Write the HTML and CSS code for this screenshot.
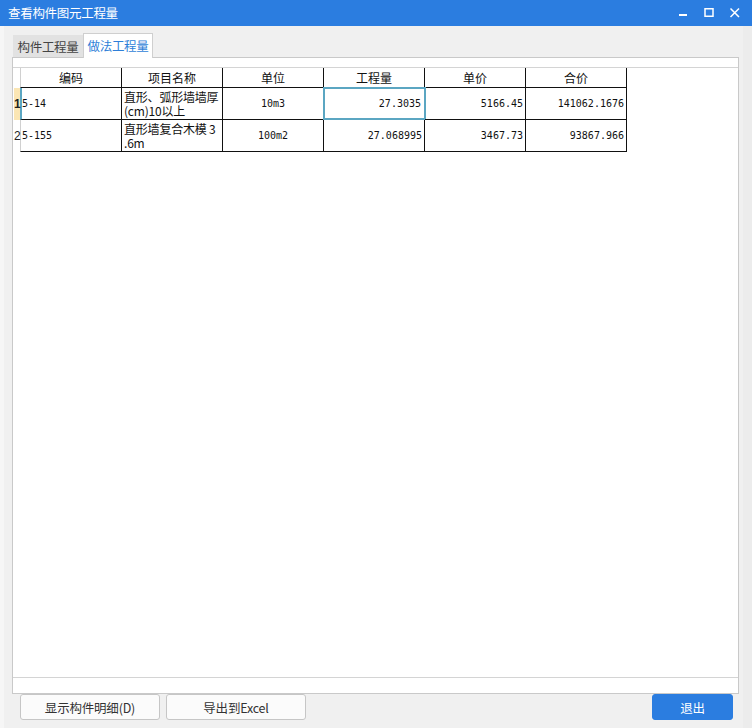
FILE: index.html
```html
<!DOCTYPE html>
<html lang="zh">
<head>
<meta charset="utf-8">
<title>查看构件图元工程量</title>
<link rel="stylesheet" href="styles.css">
</head>
<body>
<div class="window">
  <div class="titlebar">
    <div class="title">查看构件图元工程量</div>
    <div class="controls">
      <span class="ctl"><svg width="12" height="12" viewBox="0 0 12 12"><rect x="2" y="7" width="8" height="2" fill="#fff"/></svg></span>
      <span class="ctl"><svg width="12" height="12" viewBox="0 0 12 12"><rect x="2" y="1.75" width="8" height="7.5" fill="none" stroke="#fff" stroke-width="1.5"/></svg></span>
      <span class="ctl"><svg width="12" height="12" viewBox="0 0 12 12"><path d="M1.5 1.5 L10 10 M10 1.5 L1.5 10" stroke="#fff" stroke-width="1.5" fill="none"/></svg></span>
    </div>
  </div>
  <div class="main">
    <div class="tabs">
      <div class="tab">构件工程量</div>
      <div class="tab active">做法工程量</div>
    </div>
    <div class="panel">
      <div class="spacer"></div>
      <div class="gridarea">
        <div class="grid">
          <div class="row head">
            <div class="rh"></div>
            <div class="c first">编码</div>
            <div class="c">项目名称</div>
            <div class="c">单位</div>
            <div class="c">工程量</div>
            <div class="c">单价</div>
            <div class="c">合价</div>
          </div>
          <div class="row data current">
            <div class="rh">1</div>
            <div class="c first left mono">5-14</div>
            <div class="c name">直形、弧形墙墙厚(cm)10以上</div>
            <div class="c mono">10m3</div>
            <div class="c right mono selected">27.3035</div>
            <div class="c right mono">5166.45</div>
            <div class="c right mono">141062.1676</div>
          </div>
          <div class="row data">
            <div class="rh">2</div>
            <div class="c first left mono">5-155</div>
            <div class="c name">直形墙复合木模 3&#8203;.6m</div>
            <div class="c mono">100m2</div>
            <div class="c right mono">27.068995</div>
            <div class="c right mono">3467.73</div>
            <div class="c right mono">93867.966</div>
          </div>
        </div>
      </div>
      <div class="hscroll"></div>
    </div>
    <div class="buttons">
      <button class="btn">显示构件明细(D)</button>
      <button class="btn">导出到Excel</button>
      <button class="btn primary">退出</button>
    </div>
  </div>
  <div class="grip"><svg width="9" height="9" viewBox="0 0 9 9"><g fill="#7a7a7a"><rect x="7" y="1" width="2" height="2"/><rect x="4" y="4" width="2" height="2"/><rect x="7" y="4" width="2" height="2"/><rect x="1" y="7" width="2" height="2"/><rect x="4" y="7" width="2" height="2"/><rect x="7" y="7" width="2" height="2"/></g></svg></div>
</div>
</body>
</html>
```

FILE: styles.css
```css
* { box-sizing: border-box; }
html, body {
  margin: 0;
  padding: 0;
}
body {
  width: 752px;
  height: 728px;
  overflow: hidden;
  background: #f0f0f0;
  font-family: "Noto Sans CJK SC", "Noto Sans", sans-serif;
  color: #222;
}
.window {
  position: relative;
  width: 752px;
  height: 728px;
  display: flex;
  flex-direction: column;
  border-left: 4px solid #f6f6f6;
  border-right: 9px solid #ececec;
}
.titlebar {
  height: 26px;
  margin-left: -4px;
  margin-right: -9px;
  background: #2b7de0;
  color: #fff;
  display: flex;
  align-items: center;
  justify-content: space-between;
  padding-left: 8px;
  padding-right: 4px;
}
.title {
  font-size: 12.5px;
  letter-spacing: -0.3px;
  line-height: 26px;
}
.controls {
  display: flex;
  height: 26px;
}
.ctl {
  width: 26px;
  height: 26px;
  display: flex;
  align-items: center;
  justify-content: center;
}
.main {
  flex: 1;
  display: flex;
  flex-direction: column;
  padding: 0 4px 0 8px;
}
.tabs {
  height: 31px;
  display: flex;
  align-items: flex-end;
  padding-left: 1px;
}
.tab {
  width: 70px;
  height: 22px;
  background: #e2e2e2;
  color: #444;
  font-size: 12.5px;
  letter-spacing: -0.3px;
  display: flex;
  align-items: center;
  justify-content: center;
}
.tab.active {
  height: 25px;
  background: #fff;
  color: #2f7fd8;
  border: 1px solid #cfcfcf;
  border-bottom: none;
  margin-bottom: -1px;
  position: relative;
  z-index: 1;
  padding-bottom: 2px;
}
.panel {
  height: 637px;
  flex: none;
  background: #fff;
  border: 1px solid #c9c9c9;
  display: flex;
  flex-direction: column;
}
.spacer {
  height: 9px;
  flex: none;
}
.gridarea {
  height: 611px;
  flex: none;
  border-top: 1px solid #d4d4d4;
  border-bottom: 1px solid #d4d4d4;
  padding-left: 1px;
}
.hscroll {
  flex: 1;
}
.grid {
  display: flex;
  flex-direction: column;
}
.row {
  display: grid;
  grid-template-columns: 6px 102px repeat(5, 101px);
}
.row.head { height: 20px; }
.row.data { height: 32px; }
.rh {
  font-size: 12px;
  font-family: "Liberation Sans", sans-serif;
  line-height: 1;
  display: flex;
  align-items: center;
  overflow: visible;
  white-space: nowrap;
  position: relative;
  z-index: 2;
}
.current .rh {
  background: #fbe6b4;
  font-weight: bold;
}
.c {
  border-right: 1px solid #111;
  border-bottom: 1px solid #111;
  font-size: 12px;
  line-height: 13px;
  display: flex;
  align-items: center;
  justify-content: center;
  padding: 0 2px;
  position: relative;
  color: #111;
}
.c.first {
  border-left: 1px solid #d0d0d0;
}
.current .c.first {
  border-left: 2px solid #5ba6c2;
}
.c.left { justify-content: flex-start; padding-left: 1px; }
.current .c.left { padding-left: 0; }
.c.right { justify-content: flex-end; padding-right: 2px; }
.c.name {
  justify-content: flex-start;
  align-items: center;
  padding-left: 2px;
  padding-right: 0;
  letter-spacing: -0.2px;
  line-height: 13.5px;
}
.mono {
  font-family: "DejaVu Sans Mono", "Liberation Mono", monospace;
  font-size: 10px;
}
.c.selected::after {
  content: "";
  position: absolute;
  left: -1px;
  top: -1px;
  right: -2px;
  bottom: -1px;
  border: 2px solid #5ba6c2;
}
.c.selected { padding-right: 3px; }
.buttons {
  height: 28px;
  flex: none;
  display: flex;
  align-items: flex-start;
  gap: 6px;
  padding: 0 6px 0 8px;
}
.btn {
  width: 140px;
  height: 26px;
  background: #fbfbfb;
  border: 1px solid #c6c6c6;
  border-radius: 3px;
  font-family: "Noto Sans CJK SC", "Noto Sans", sans-serif;
  font-size: 12.5px;
  color: #333;
  padding: 0;
  letter-spacing: -0.2px;
}
.btn.primary {
  width: 81px;
  margin-left: auto;
  background: #2b7de0;
  border-color: #2b7de0;
  color: #fff;
}
.grip {
  position: absolute;
  right: -9px;
  bottom: 1px;
  width: 10px;
  height: 10px;
}
```
